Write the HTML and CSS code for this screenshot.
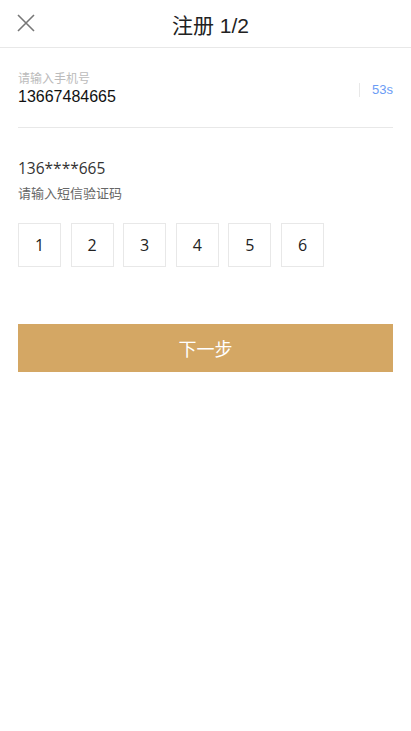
FILE: index.html
```html
<!DOCTYPE html>
<html lang="zh">
<head>
<meta charset="utf-8">
<link rel="stylesheet" href="styles.css">
</head>
<body>
<header class="header">
  <span class="close">
    <svg width="18" height="18" viewBox="0 0 18 18"><path d="M1 1L17 17M17 1L1 17" stroke="#777" stroke-width="1.6" fill="none"/></svg>
  </span>
  <h1 class="title">注册 1/2</h1>
</header>
<main class="content">
  <div class="phone-row">
    <div class="phone-field">
      <div class="phone-label">请输入手机号</div>
      <div class="phone-value">13667484665</div>
    </div>
    <div class="timer">53s</div>
  </div>
  <div class="masked">136****665</div>
  <div class="hint">请输入短信验证码</div>
  <div class="codes">
    <div class="code">1</div>
    <div class="code">2</div>
    <div class="code">3</div>
    <div class="code">4</div>
    <div class="code">5</div>
    <div class="code">6</div>
  </div>
  <button class="next">下一步</button>
</main>
</body>
</html>
```
FILE: styles.css
```css
html, body {
  margin: 0;
  padding: 0;
  background: #fff;
  font-family: "Open Sans", "Noto Sans CJK SC", sans-serif;
  color: #222;
}
.header {
  position: relative;
  height: 47px;
  border-bottom: 1px solid #e8e8e8;
  display: flex;
  align-items: center;
  justify-content: center;
}
.close {
  position: absolute;
  left: 17px;
  top: 14px;
  width: 18px;
  height: 18px;
}
.close svg { display: block; }
.title {
  margin: 0 0 0 10px;
  font-size: 21px;
  font-weight: normal;
  color: #222;
  font-family: "Liberation Sans", "Noto Sans CJK SC", sans-serif;
}
.content {
  padding: 0 18px;
}
.phone-row {
  display: flex;
  align-items: flex-start;
  padding-top: 23px;
  height: 56px;
  border-bottom: 1px solid #e8e8e8;
}
.phone-field { flex: 1; }
.phone-label {
  font-size: 12px;
  color: #bbb;
  line-height: 16px;
}
.phone-value {
  font-size: 16px;
  color: #111;
  line-height: 19px;
  font-family: "Liberation Sans", sans-serif;
}
.timer {
  margin-top: 12px;
  border-left: 1px solid #e8e8e8;
  padding-left: 12px;
  font-size: 13px;
  color: #6b9cf5;
  line-height: 14px;
  font-family: "Liberation Sans", sans-serif;
}
.masked {
  margin-top: 30px;
  font-size: 15.5px;
  line-height: 20px;
  color: #333;
}
.hint {
  margin-top: 6px;
  font-size: 13px;
  color: #666;
  line-height: 18px;
}
.codes {
  display: flex;
  gap: 9.6px;
  margin-top: 21px;
}
.code {
  box-sizing: border-box;
  width: 43px;
  height: 44px;
  border: 1px solid #e8e8e8;
  display: flex;
  align-items: center;
  justify-content: center;
  font-size: 16px;
  color: #222;
}
.next {
  display: block;
  width: 100%;
  height: 48px;
  margin-top: 57px;
  border: none;
  background: #d4a764;
  color: #fff;
  font-size: 18px;
  font-family: "Noto Sans CJK SC", sans-serif;
  padding: 0;
}
```
